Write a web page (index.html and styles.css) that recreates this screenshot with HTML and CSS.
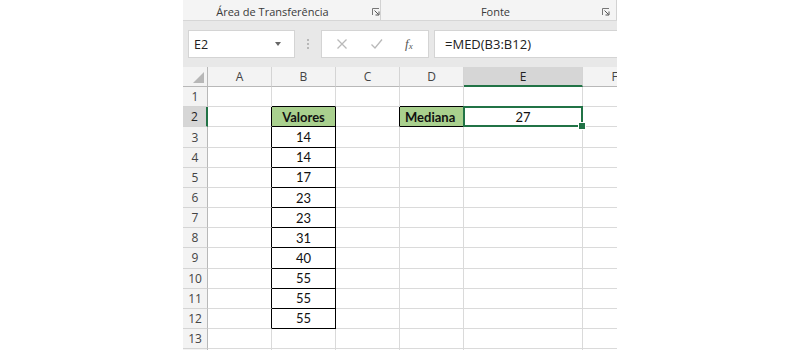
FILE: index.html
```html
<!DOCTYPE html>
<html>
<head>
<meta charset="utf-8">
<link rel="stylesheet" href="styles.css">
</head>
<body>
<div class="excel">
  <div class="ribbon">
    <div class="group clip">
      <span class="label">Área de Transferência</span>
      <svg class="launcher" width="8" height="8" viewBox="0 0 8 8"><path d="M0.5 7V0.5H7" stroke="#777" fill="none"/><path d="M2.5 2.5l4 4M7 3.5V7H3.5" stroke="#555" fill="none"/></svg>
    </div>
    <div class="group font">
      <span class="label">Fonte</span>
      <svg class="launcher" width="8" height="8" viewBox="0 0 8 8"><path d="M0.5 7V0.5H7" stroke="#777" fill="none"/><path d="M2.5 2.5l4 4M7 3.5V7H3.5" stroke="#555" fill="none"/></svg>
    </div>
  </div>

  <div class="formula">
    <div class="namebox">
      <span>E2</span>
      <span class="caret"></span>
    </div>
    <div class="grip"><i></i><i></i><i></i></div>
    <div class="fxbox">
      <svg class="ico" width="12" height="12" viewBox="0 0 12 12"><path d="M1.5 1.5l9 9M10.5 1.5l-9 9" stroke="#b9b9b9" stroke-width="1.3" fill="none"/></svg>
      <svg class="ico" width="13" height="12" viewBox="0 0 13 12"><path d="M1.5 6.5l3.5 3.5 7-8.5" stroke="#b9b9b9" stroke-width="1.3" fill="none"/></svg>
      <span class="fx">f<sub>x</sub></span>
    </div>
    <div class="input">=MED(B3:B12)</div>
  </div>

  <div class="sheet">
    <div class="hd corner"></div>
    <div class="hd">A</div><div class="hd">B</div><div class="hd">C</div><div class="hd">D</div><div class="hd sel">E</div><div class="hd">F</div>

    <div class="rh">1</div><div class="c"></div><div class="c bt"></div><div class="c"></div><div class="c bt"></div><div class="c"></div><div class="c"></div>

    <div class="rh sel">2</div><div class="c bl"></div><div class="c bx head">Valores</div><div class="c bl"></div><div class="c bx head left">Mediana</div><div class="c active">27</div><div class="c"></div>

    <div class="rh">3</div><div class="c bl"></div><div class="c bx">14</div><div class="c"></div><div class="c"></div><div class="c"></div><div class="c"></div>
    <div class="rh">4</div><div class="c bl"></div><div class="c bx">14</div><div class="c"></div><div class="c"></div><div class="c"></div><div class="c"></div>
    <div class="rh">5</div><div class="c bl"></div><div class="c bx">17</div><div class="c"></div><div class="c"></div><div class="c"></div><div class="c"></div>
    <div class="rh">6</div><div class="c bl"></div><div class="c bx">23</div><div class="c"></div><div class="c"></div><div class="c"></div><div class="c"></div>
    <div class="rh">7</div><div class="c bl"></div><div class="c bx">23</div><div class="c"></div><div class="c"></div><div class="c"></div><div class="c"></div>
    <div class="rh">8</div><div class="c bl"></div><div class="c bx">31</div><div class="c"></div><div class="c"></div><div class="c"></div><div class="c"></div>
    <div class="rh">9</div><div class="c bl"></div><div class="c bx">40</div><div class="c"></div><div class="c"></div><div class="c"></div><div class="c"></div>
    <div class="rh">10</div><div class="c bl"></div><div class="c bx">55</div><div class="c"></div><div class="c"></div><div class="c"></div><div class="c"></div>
    <div class="rh">11</div><div class="c bl"></div><div class="c bx">55</div><div class="c"></div><div class="c"></div><div class="c"></div><div class="c"></div>
    <div class="rh">12</div><div class="c bl"></div><div class="c bx">55</div><div class="c"></div><div class="c"></div><div class="c"></div><div class="c"></div>
    <div class="rh">13</div><div class="c"></div><div class="c"></div><div class="c"></div><div class="c"></div><div class="c"></div><div class="c"></div>
    <div class="rh"></div><div class="c"></div><div class="c"></div><div class="c"></div><div class="c"></div><div class="c"></div><div class="c"></div>
  </div>
</div>
</body>
</html>
```

FILE: styles.css
```css
* {
  box-sizing: border-box;
}

body {
  margin: 0;
  background: #fff;
}

.excel {
  width: 434px;
  height: 350px;
  margin: 0 auto;
  overflow: hidden;
  background: #e8e8e8;
  font-family: "Open Sans", sans-serif;
}

/* ribbon */
.ribbon {
  display: flex;
  height: 21px;
  background: #f4f4f4;
  border-bottom: 1px solid #d6d6d6;
}
.group {
  position: relative;
  display: flex;
  align-items: center;
  justify-content: center;
  padding-top: 2px;
  border-right: 1px solid #d2d2d2;
  font-size: 11px;
  color: #3a3a3a;
}
.group.clip {
  width: 201px;
  padding-right: 18px;
}
.group.font {
  width: 240px;
  padding-right: 6px;
}
.launcher {
  position: absolute;
  top: 8px;
  left: 189px;
}
.group.font .launcher {
  left: 221px;
}

/* formula bar */
.formula {
  display: flex;
  align-items: stretch;
  height: 28px;
  margin-top: 9px;
  padding-left: 5px;
}
.namebox {
  width: 107px;
  display: flex;
  align-items: center;
  justify-content: space-between;
  padding: 0 13px 0 5px;
  background: #fff;
  border: 1px solid #d4d4d4;
  font-size: 12.5px;
  color: #222;
}
.caret {
  width: 0;
  height: 0;
  border-left: 3.5px solid transparent;
  border-right: 3.5px solid transparent;
  border-top: 4px solid #666;
}
.grip {
  width: 26px;
  display: flex;
  flex-direction: column;
  align-items: center;
  justify-content: center;
  gap: 2px;
}
.grip i {
  width: 2px;
  height: 2px;
  background: #b8b8b8;
}
.fxbox {
  width: 108px;
  display: flex;
  align-items: center;
  gap: 22px;
  padding-left: 14px;
  background: #fff;
  border: 1px solid #d4d4d4;
}
.fx {
  font-family: "Liberation Serif", serif;
  font-style: italic;
  font-size: 13px;
  color: #555;
}
.fx sub {
  font-size: 9px;
  vertical-align: -1px;
}
.input {
  flex: 1;
  margin-left: 5px;
  margin-right: -4px;
  display: flex;
  align-items: center;
  padding-left: 10px;
  background: #fff;
  border: 1px solid #d4d4d4;
  font-size: 13px;
  color: #222;
}

/* sheet */
.sheet {
  display: grid;
  grid-template-columns: 25px 64px 64px 64px 64px 119px 64px;
  grid-auto-rows: 20.17px;
  width: 464px;
  margin-top: 9px;
  background: #fff;
  font-family: Lato, sans-serif;
}
.hd {
  display: flex;
  align-items: center;
  justify-content: center;
  background: #f3f3f3;
  border-right: 1px solid #d4d4d4;
  border-bottom: 1px solid #b8b8b8;
  font-family: "Open Sans", sans-serif;
  font-size: 12px;
  color: #444;
}
.hd.corner {
  position: relative;
  border-right-color: #b8b8b8;
}
.hd.corner::after {
  content: "";
  position: absolute;
  right: 3px;
  bottom: 3px;
  border-left: 11px solid transparent;
  border-bottom: 11px solid #b7b7b7;
}
.hd.sel {
  background: #d6d6d6;
  border-bottom: 2px solid #217346;
  color: #222;
}
.rh {
  display: flex;
  align-items: center;
  justify-content: center;
  background: #f3f3f3;
  border-right: 1px solid #b8b8b8;
  border-bottom: 1px solid #d4d4d4;
  font-family: "Open Sans", sans-serif;
  font-size: 12px;
  color: #444;
}
.rh.sel {
  background: #d6d6d6;
  border-right: 2px solid #217346;
  color: #222;
}
.c {
  display: flex;
  align-items: center;
  justify-content: center;
  border-right: 1px solid #dadada;
  border-bottom: 1px solid #dadada;
  font-size: 13px;
  color: #111;
}
.c.bt {
  border-bottom-color: #000;
}
.c.bl {
  border-right-color: #000;
}
.c.bx {
  border-right-color: #000;
  border-bottom-color: #000;
}
.c.head {
  background: #a9d08e;
  font-weight: bold;
}
.c.left {
  justify-content: flex-start;
  padding-left: 5px;
}
.c.active {
  position: relative;
}
.c.active::before {
  content: "";
  position: absolute;
  left: -1px;
  top: -1px;
  right: -1px;
  bottom: -1px;
  border: 2px solid #217346;
}
.c.active::after {
  content: "";
  position: absolute;
  right: -4px;
  bottom: -4px;
  width: 6px;
  height: 6px;
  background: #217346;
  border: 1px solid #fff;
}
```
